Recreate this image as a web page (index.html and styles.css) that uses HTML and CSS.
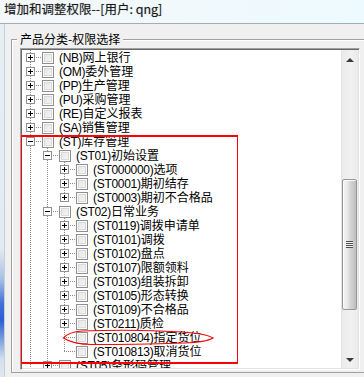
FILE: index.html
```html
<!DOCTYPE html>
<html>
<head>
<meta charset="utf-8">
<title>增加和调整权限</title>
<link rel="stylesheet" href="styles.css">
</head>
<body>
<div class="titlebar">增加和调整权限--[用户: qng]</div>
<div class="main">
  <div class="frame-left"></div>
  <div class="client">
    <div class="group">
      <div class="legend">产品分类-权限选择</div>
      <div class="listbox">
        <div class="tree">
          <div class="row"><span class="cn mid"><span class="ex plus"></span></span><span class="cb"></span><span class="t"><span class="c">(NB)</span>网上银行</span></div>
          <div class="row"><span class="cn mid"><span class="ex plus"></span></span><span class="cb"></span><span class="t"><span class="c">(OM)</span>委外管理</span></div>
          <div class="row"><span class="cn mid"><span class="ex plus"></span></span><span class="cb"></span><span class="t"><span class="c">(PP)</span>生产管理</span></div>
          <div class="row"><span class="cn mid"><span class="ex plus"></span></span><span class="cb"></span><span class="t"><span class="c">(PU)</span>采购管理</span></div>
          <div class="row"><span class="cn mid"><span class="ex plus"></span></span><span class="cb"></span><span class="t"><span class="c">(RE)</span>自定义报表</span></div>
          <div class="row"><span class="cn mid"><span class="ex plus"></span></span><span class="cb"></span><span class="t"><span class="c">(SA)</span>销售管理</span></div>
          <div class="row"><span class="cn mid"><span class="ex minus"></span></span><span class="cb"></span><span class="t"><span class="c">(ST)</span>库存管理</span></div>
          <div class="row"><span class="g v"></span><span class="cn mid"><span class="ex minus"></span></span><span class="cb"></span><span class="t"><span class="c">(ST01)</span>初始设置</span></div>
          <div class="row"><span class="g v"></span><span class="g v"></span><span class="cn mid"><span class="ex plus"></span></span><span class="cb"></span><span class="t"><span class="c">(ST000000)</span>选项</span></div>
          <div class="row"><span class="g v"></span><span class="g v"></span><span class="cn mid"><span class="ex plus"></span></span><span class="cb"></span><span class="t"><span class="c">(ST0001)</span>期初结存</span></div>
          <div class="row"><span class="g v"></span><span class="g v"></span><span class="cn last"><span class="ex plus"></span></span><span class="cb"></span><span class="t"><span class="c">(ST0003)</span>期初不合格品</span></div>
          <div class="row"><span class="g v"></span><span class="cn mid"><span class="ex minus"></span></span><span class="cb"></span><span class="t"><span class="c">(ST02)</span>日常业务</span></div>
          <div class="row"><span class="g v"></span><span class="g v"></span><span class="cn mid"><span class="ex plus"></span></span><span class="cb"></span><span class="t"><span class="c">(ST0119)</span>调拨申请单</span></div>
          <div class="row"><span class="g v"></span><span class="g v"></span><span class="cn mid"><span class="ex plus"></span></span><span class="cb"></span><span class="t"><span class="c">(ST0101)</span>调拨</span></div>
          <div class="row"><span class="g v"></span><span class="g v"></span><span class="cn mid"><span class="ex plus"></span></span><span class="cb"></span><span class="t"><span class="c">(ST0102)</span>盘点</span></div>
          <div class="row"><span class="g v"></span><span class="g v"></span><span class="cn mid"><span class="ex plus"></span></span><span class="cb"></span><span class="t"><span class="c">(ST0107)</span>限额领料</span></div>
          <div class="row"><span class="g v"></span><span class="g v"></span><span class="cn mid"><span class="ex plus"></span></span><span class="cb"></span><span class="t"><span class="c">(ST0103)</span>组装拆卸</span></div>
          <div class="row"><span class="g v"></span><span class="g v"></span><span class="cn mid"><span class="ex plus"></span></span><span class="cb"></span><span class="t"><span class="c">(ST0105)</span>形态转换</span></div>
          <div class="row"><span class="g v"></span><span class="g v"></span><span class="cn mid"><span class="ex plus"></span></span><span class="cb"></span><span class="t"><span class="c">(ST0109)</span>不合格品</span></div>
          <div class="row"><span class="g v"></span><span class="g v"></span><span class="cn mid"><span class="ex plus"></span></span><span class="cb"></span><span class="t"><span class="c">(ST0211)</span>质检</span></div>
          <div class="row"><span class="g v"></span><span class="g v"></span><span class="cn mid"></span><span class="cb"></span><span class="t"><span class="c">(ST010804)</span>指定货位</span></div>
          <div class="row"><span class="g v"></span><span class="g v"></span><span class="cn last"></span><span class="cb"></span><span class="t"><span class="c">(ST010813)</span>取消货位</span></div>
          <div class="row"><span class="g v"></span><span class="cn mid"><span class="ex plus"></span></span><span class="cb"></span><span class="t"><span class="c">(ST05)</span>条形码管理</span></div>
        </div>
        <div class="vscroll">
          <div class="sbtn"><span class="arr up"></span></div>
          <div class="thumb"><span class="grip"></span></div>
          <div class="strack"></div>
          <div class="sbtn"><span class="arr down"></span></div>
        </div>
      </div>
    </div>
  </div>
</div>
<svg class="annot" width="364" height="377" viewBox="0 0 364 377">
  <g fill="#ff0000" shape-rendering="crispEdges">
    <rect x="21" y="135" width="217" height="2"/>
    <rect x="21" y="362" width="217" height="2"/>
    <rect x="21" y="135" width="1" height="229"/>
    <rect x="237" y="135" width="1" height="229"/>
  </g>
  <path d="M63.5 338 C67 334, 73 331.5, 82 331 C110 330, 150 330, 182 332 C198 333, 208 335, 213 338 C208 341, 198 342.5, 184 343 C150 344, 115 344.5, 92 344.5 C77 344.5, 68 341, 63.5 338 Z" fill="none" stroke="#ff0000" stroke-width="1.2"/>
</svg>
</body>
</html>
```

FILE: styles.css
```css
html, body {
  margin: 0;
  padding: 0;
}
body {
  width: 364px;
  height: 377px;
  overflow: hidden;
  position: relative;
  background: #f0f0f0;
}

.titlebar {
  height: 23px;
  border-bottom: 1px solid #9db0ba;
  background: linear-gradient(to right, #f5f8fa 0%, #f1f9fc 50%, #edfaff 100%);
  font-family: "Noto Sans CJK SC", "Noto Sans", sans-serif;
  font-size: 12.5px;
  line-height: 18px;
  color: #1a1a1a;
  padding-left: 4px;
  white-space: nowrap;
  text-shadow: 0 0 1px rgba(0, 0, 0, 0.35);
}

.main {
  display: flex;
  height: 353px;
}

.frame-left {
  width: 4px;
  flex: none;
  border-right: 1px solid #c6d0d8;
  background: linear-gradient(to bottom,
    #e9eef3 0px, #e3eaf1 225px, #a9c0e6 255px, #3f6fd8 280px,
    #2c5dd4 296px, #86a7e2 318px, #d6e0ec 335px, #dfe7ef 353px);
}

.client {
  flex: 1;
  padding: 15px 0 0 6px;
  background: #f0f0f0;
  overflow: hidden;
}

.group {
  width: 360px;
  border: 1px solid #a0a0a0;
  box-shadow: inset 1px 1px 0 #ffffff;
}

.legend {
  width: fit-content;
  margin: -8px 0 0 5px;
  padding: 0 3px;
  background: #f0f0f0;
  font-family: "Noto Sans CJK SC", sans-serif;
  font-size: 12px;
  line-height: 14px;
  color: #000;
  white-space: nowrap;
}

.listbox {
  width: 340px;
  height: 322px;
  box-sizing: border-box;
  margin: 2px 0 2px 8px;
  padding: 1px;
  border: 1px solid;
  border-color: #a0a0a0 #ffffff #ffffff #a0a0a0;
  box-shadow: inset 1px 1px 0 #696969, inset -1px -1px 0 #e3e3e3;
  background: #fff;
  display: flex;
}

.tree {
  flex: 1;
  overflow: hidden;
  background: #fff;
}

.row {
  display: flex;
  height: 14px;
  align-items: flex-start;
}

.g {
  width: 17px;
  height: 14px;
  flex: none;
}
.g.v {
  background: repeating-linear-gradient(to bottom, #8c8c8c 0 1px, transparent 1px 2px) 8px 0 / 1px 14px no-repeat;
}

.cn {
  width: 20px;
  height: 14px;
  flex: none;
}
.cn.mid {
  background:
    repeating-linear-gradient(to bottom, #8c8c8c 0 1px, transparent 1px 2px) 8px 0 / 1px 14px no-repeat,
    repeating-linear-gradient(to right, #8c8c8c 0 1px, transparent 1px 2px) 8px 7px / 12px 1px no-repeat;
}
.cn.last {
  background:
    repeating-linear-gradient(to bottom, #8c8c8c 0 1px, transparent 1px 2px) 8px 0 / 1px 8px no-repeat,
    repeating-linear-gradient(to right, #8c8c8c 0 1px, transparent 1px 2px) 8px 7px / 12px 1px no-repeat;
}

.ex {
  display: block;
  width: 9px;
  height: 9px;
  box-sizing: border-box;
  margin: 3px 0 0 4px;
  border: 1px solid #919191;
  background-color: #fff;
}
.ex.plus {
  background:
    linear-gradient(#000, #000) center / 5px 1px no-repeat,
    linear-gradient(#000, #000) center / 1px 5px no-repeat,
    #fff;
}
.ex.minus {
  background:
    linear-gradient(#000, #000) center / 5px 1px no-repeat,
    #fff;
}

.cb {
  width: 12px;
  height: 12px;
  flex: none;
  box-sizing: border-box;
  margin: 2px 5px 0 0;
  border: 1px solid #8e8f8f;
  background: linear-gradient(135deg, #e4e4e4 0%, #f7f7f7 100%);
  box-shadow: inset 0 0 0 1px #fbfbfb, inset 0 0 0 2px #d9dadb;
}

.t {
  font-family: "Noto Sans CJK SC", sans-serif;
  font-size: 12px;
  line-height: 14px;
  color: #000;
  white-space: nowrap;
}
.c {
  font-family: "Liberation Sans", sans-serif;
  letter-spacing: -0.3px;
}

.vscroll {
  width: 17px;
  flex: none;
  display: flex;
  flex-direction: column;
  background: linear-gradient(to right, #e2e2e2 0, #ececec 2px, #f1f1f1 60%, #eaeaea 100%);
}
.sbtn {
  height: 17px;
  flex: none;
  display: flex;
  align-items: center;
  justify-content: center;
}
.arr {
  width: 0;
  height: 0;
  border-left: 4px solid transparent;
  border-right: 4px solid transparent;
}
.arr.up {
  border-bottom: 4px solid #3a3a3a;
  margin-top: 2px;
}
.arr.down {
  border-top: 4px solid #3a3a3a;
}
.thumb {
  margin: 112px 1px 0 1px;
  height: 131px;
  flex: none;
  box-sizing: border-box;
  border: 1px solid #979797;
  border-radius: 2px;
  background: linear-gradient(to right, #f4f4f4 0%, #e9e9e9 35%, #d9d9d9 50%, #cbcbcb 75%, #bdbdbd 100%);
  box-shadow: inset 1px 1px 0 #fbfbfb;
  display: flex;
  align-items: center;
  justify-content: center;
}
.grip {
  width: 7px;
  height: 7px;
  background: repeating-linear-gradient(to bottom, #4d4d4d 0 1px, #f2f2f2 1px 2px);
}
.strack {
  flex: 1;
}

.annot {
  position: absolute;
  left: 0;
  top: 0;
  pointer-events: none;
}
```
